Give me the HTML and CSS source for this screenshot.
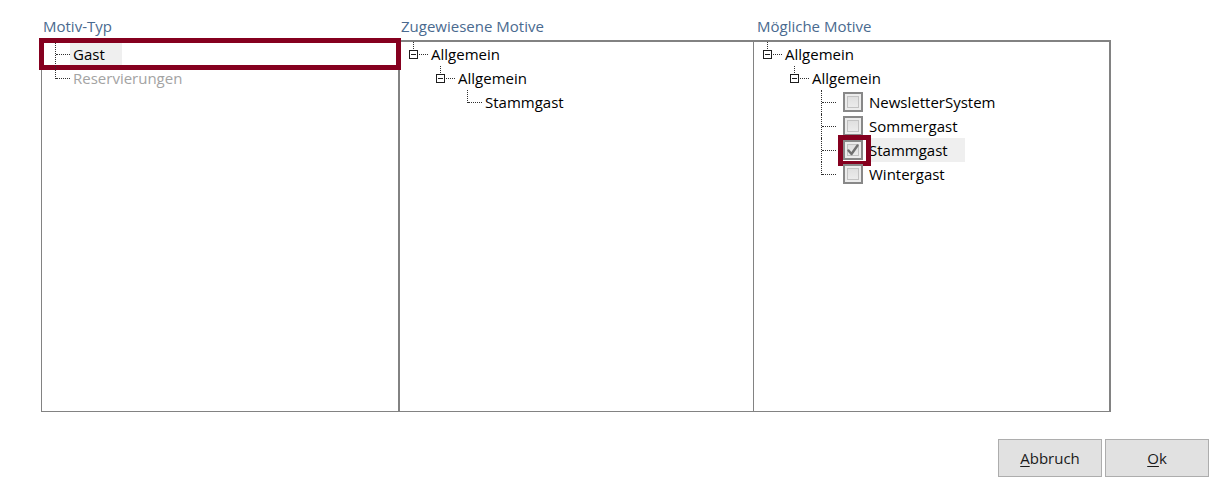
FILE: index.html
```html
<!DOCTYPE html>
<html lang="de">
<head>
<meta charset="utf-8">
<title>Motive</title>
<link rel="stylesheet" href="styles.css">
</head>
<body>
<div class="dialog">
  <div class="panels">
    <section class="col col-type">
      <div class="hdr">Motiv-Typ</div>
      <div class="box">
        <div class="row l0 marked">
          <span class="conn full"></span>
          <span class="label selected">Gast</span>
        </div>
        <div class="row l0">
          <span class="conn half"></span>
          <span class="label disabled">Reservierungen</span>
        </div>
      </div>
    </section>
    <section class="col col-assigned">
      <div class="hdr">Zugewiesene Motive</div>
      <div class="box">
        <div class="row l0">
          <span class="conn half"><span class="toggle"></span></span>
          <span class="label">Allgemein</span>
        </div>
        <div class="row l1">
          <span class="conn half"><span class="toggle"></span></span>
          <span class="label">Allgemein</span>
        </div>
        <div class="row l2">
          <span class="conn half"></span>
          <span class="label">Stammgast</span>
        </div>
      </div>
    </section>
    <section class="col col-possible">
      <div class="hdr">Mögliche Motive</div>
      <div class="box">
        <div class="row l0">
          <span class="conn half"><span class="toggle"></span></span>
          <span class="label">Allgemein</span>
        </div>
        <div class="row l1">
          <span class="conn half"><span class="toggle"></span></span>
          <span class="label">Allgemein</span>
        </div>
        <div class="row l2">
          <span class="conn full"></span>
          <span class="chk"></span>
          <span class="label">NewsletterSystem</span>
        </div>
        <div class="row l2">
          <span class="conn full"></span>
          <span class="chk"></span>
          <span class="label">Sommergast</span>
        </div>
        <div class="row l2">
          <span class="conn full"></span>
          <span class="chk checked marked-chk">
            <svg class="tick" width="16" height="16" viewBox="0 0 16 16"><path d="M3.5 8.5 L6.5 12 L12.5 3.5" fill="none" stroke="#707070" stroke-width="2.4" stroke-linecap="round" stroke-linejoin="round"/></svg>
          </span>
          <span class="label selected">Stammgast</span>
        </div>
        <div class="row l2">
          <span class="conn half"></span>
          <span class="chk"></span>
          <span class="label">Wintergast</span>
        </div>
      </div>
    </section>
  </div>
  <div class="footer">
    <button class="btn" type="button"><u>A</u>bbruch</button>
    <button class="btn" type="button"><u>O</u>k</button>
  </div>
</div>
</body>
</html>
```
FILE: styles.css
```css
html, body {
  margin: 0;
  padding: 0;
  background: #ffffff;
}

body {
  font-family: "Open Sans", "Noto Sans", sans-serif;
  font-size: 15px;
  color: #000000;
}

.dialog {
  width: 1230px;
  height: 492px;
  overflow: hidden;
}

.panels {
  display: flex;
  padding-left: 41px;
  margin-top: 16px;
}

.col-type { width: 358px; }
.col-assigned { width: 355px; }
.col-possible { width: 357px; }

.hdr {
  height: 24px;
  line-height: 20px;
  padding-left: 2px;
  color: #4a6a8f;
}

.col-possible .hdr { padding-left: 3px; }

.box {
  box-sizing: border-box;
  height: 372px;
  border: 1px solid #828282;
  border-top-width: 2px;
  background: #ffffff;
}

.col-possible .box {
  border-left: none;
  border-right-width: 2px;
}

.row {
  display: flex;
  align-items: center;
  height: 24px;
  position: relative;
}

.l0 { padding-left: 4px; }
.l1 { padding-left: 31px; }
.l2 { padding-left: 58px; }

.conn {
  position: relative;
  flex: none;
  width: 24px;
  height: 24px;
}

.conn::before {
  content: "";
  position: absolute;
  left: 9px;
  top: 0;
  border-left: 1px dotted #303030;
}

.conn.full::before { height: 24px; }
.conn.half::before { height: 13px; }

.conn::after {
  content: "";
  position: absolute;
  left: 10px;
  top: 12px;
  width: 14px;
  border-top: 1px dotted #303030;
}

.toggle {
  position: absolute;
  z-index: 1;
  left: 5px;
  top: 8px;
  width: 9px;
  height: 9px;
  box-sizing: border-box;
  border: 1px solid #1e1e1e;
  background: #ffffff;
}

.toggle::after {
  content: "";
  position: absolute;
  left: 1px;
  top: 3px;
  width: 5px;
  height: 1px;
  background: #1e1e1e;
}

.label {
  height: 24px;
  line-height: 24px;
  padding: 0 17px 0 3px;
  white-space: nowrap;
}

.label.selected { background: #efefef; }
.label.disabled { color: #a3a3a3; }

.chk {
  position: relative;
  flex: none;
  box-sizing: border-box;
  width: 20px;
  height: 20px;
  margin-left: 7px;
  margin-right: 3px;
  border: 2px solid #888888;
  background: linear-gradient(#dcdcdc, #efefef);
  box-shadow: inset 0 0 0 2px #ececec, inset 0 0 0 3px #c2c2c2;
}

.tick {
  position: absolute;
  left: 0;
  top: 0;
}

.marked::after {
  content: "";
  position: absolute;
  left: -3px;
  right: -3px;
  top: -4px;
  bottom: -4px;
  border: 5px solid #85001f;
  pointer-events: none;
}

.marked-chk::after {
  content: "";
  position: absolute;
  left: -7px;
  top: -7px;
  width: 33px;
  height: 31px;
  box-sizing: border-box;
  border: 5px solid #85001f;
}

.footer {
  display: flex;
  justify-content: flex-end;
  gap: 3px;
  padding-right: 21px;
  margin-top: 27px;
}

.btn {
  box-sizing: border-box;
  width: 104px;
  height: 38px;
  border: 1px solid #adadad;
  background: #e1e1e1;
  font-family: "Open Sans", "Noto Sans", sans-serif;
  font-size: 15px;
  color: #1a1a1a;
  padding: 0;
}

.btn u {
  text-underline-offset: 2px;
}
```
